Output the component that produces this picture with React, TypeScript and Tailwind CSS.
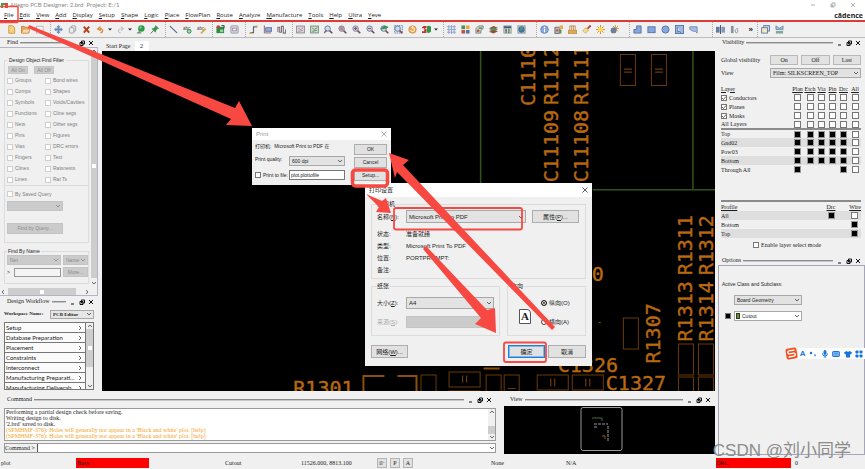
import type { ReactNode } from "react";
import clsx from "clsx";

const SERIF = "font-['Liberation_Serif','Noto_Sans_CJK_SC',serif]";
const SANS = "font-['Liberation_Sans','Noto_Sans_CJK_SC',sans-serif]";
const UI = "font-['Open_Sans','Noto_Sans_CJK_SC',sans-serif]";
const LATO = "font-['Lato','Noto_Sans_CJK_SC',sans-serif]";

const menus = [
  "File", "Edit", "View", "Add", "Display", "Setup", "Shape", "Logic", "Place", "FlowPlan",
  "Route", "Analyze", "Manufacture", "Tools", "Help", "Ultra", "Yeve",
];

const magnifier = (
  <>
    <circle cx="4" cy="4" r="3" fill="#cfdcec" stroke="#6b7fa6" strokeWidth="1.1" />
    <path d="M6.2 6.2 9.2 9.2" stroke="#7d4a52" strokeWidth="1.8" />
  </>
);
const board = <rect x="1" y="1" width="8" height="8" fill="#d4d9de" stroke="#8b929a" />;

const glyphs: Record<string, ReactNode> = {
  new: <path d="M2 .8h4.2L8.5 3v6.2H2z" fill="#f6cf7f" stroke="#cf9440" />,
  open: (
    <>
      <path d="M.5 8.8V1.5h3.2l1 1h4v6.3z" fill="#e9a860" stroke="#c9843c" />
      <path d="M.6 9 2.2 4.5h7.6L8.4 9z" fill="#fbd9a4" stroke="#c9843c" strokeWidth=".7" />
    </>
  ),
  save: <rect x="1.5" y="1.5" width="7.5" height="7.5" fill="#fff" stroke="#b3b3b3" />,
  move: (
    <path
      d="M5 .3 6.8 2.3H5.7v2h2V3.2l2 1.8-2 1.8V5.7h-2v2h1.1L5 9.7 3.2 7.7h1.1v-2h-2v1.1L.3 5l2-1.8v1.1h2v-2H3.2z"
      fill="#6f93c0"
      stroke="#4c6f9d"
      strokeWidth=".4"
    />
  ),
  copy: (
    <g fill="#eee" stroke="#9a9a9a">
      <rect x="3.5" y="1" width="5" height="6" rx="1" />
      <rect x="1.5" y="3" width="5" height="6" rx="1" />
    </g>
  ),
  delete: <path d="M2 1.8 8 8.4M8 1.8 2 8.4" stroke="#b3401d" strokeWidth="2.2" />,
  undo: <path d="M5 8.8C8.5 7.5 8 3.8 4 4.2M5 1.8 2 4.3l3.2 2" fill="none" stroke="#e08b35" strokeWidth="1.5" />,
  redo: <path d="M5 8.8C1.5 7.5 2 3.8 6 4.2M5.5 2 8.2 4.2 5.5 6.2" fill="none" stroke="#c3c3c3" strokeWidth="1.3" />,
  ball: (
    <>
      <circle cx="6" cy="4" r="3.6" fill="#2c9a45" />
      <circle cx="5" cy="3" r="1.2" fill="#8ed49c" />
      <path d="M1 8.8h5M3.5 6v3" stroke="#51705b" />
    </>
  ),
  pin: (
    <>
      <path d="M6.3.7 9.5 3.8 7.8 4.3 6.3 6.3 6 8 2.2 4.2 4 3.8 5.8 2.2z" fill="#2f9b4a" stroke="#1c6b31" strokeWidth=".5" />
      <path d="M4 6 .8 9.4" stroke="#4a6b55" />
    </>
  ),
  line: <path d="M1 1.2 9 8.8" stroke="#53648f" strokeWidth="1.2" />,
  textAdd: (
    <>
      <text x="0" y="5" fontSize="5" fill="#444">abc</text>
      <circle cx="6.8" cy="7" r="2.6" fill="#3f9d50" />
      <path d="M6.8 5.5v3M5.3 7h3" stroke="#e4f3e6" strokeWidth=".8" />
    </>
  ),
  textEdit: (
    <>
      <text x="0" y="5" fontSize="5" fill="#444">abc</text>
      <path d="M9.5 4 4.5 9.3" stroke="#e5a348" strokeWidth="2" />
    </>
  ),
  place: (
    <>
      <rect x=".5" y="2" width="8.5" height="7" fill="#2d8b42" />
      <rect x="4.5" y="5" width="3.5" height="3" fill="#9ad0a6" />
      <circle cx="2.5" cy="2.3" r="2" fill="#b54a36" />
      <path d="M6 .5h3v3" stroke="#235" fill="none" />
    </>
  ),
  chip: (
    <>
      <rect x="1" y="1" width="8" height="8" rx="1" fill="#dfe4ec" stroke="#8591a8" />
      <rect x="3" y="3.5" width="4" height="3" fill="#fff" stroke="#a07f86" />
    </>
  ),
  slide: (
    <>
      <path d="M1.5 8.5H5V2h4" fill="none" stroke="#5f6470" strokeWidth="1.3" />
      <path d="M.5 9h3M7 1.3h2.5" stroke="#d4a634" strokeWidth="1.6" />
    </>
  ),
  route: (
    <>
      <rect x="3" y="3" width="6.5" height="4" fill="#9aabcf" stroke="#5e76a8" />
      <path d="M1.5.5v8.3H9" fill="none" stroke="#8d5a5f" />
    </>
  ),
  delay: <path d="M1 8V2.5h2V8h2V1.5h2V9h2.5V5" fill="none" stroke="#7b6f78" strokeWidth="1.2" />,
  unrats: (
    <>
      <rect x=".7" y="1.2" width="8.6" height="7.6" fill="#dedbe2" stroke="#89808f" />
      <path d="M2.5 3.5 5 5l3-2M2.5 7 7.5 6" stroke="#ad7e86" fill="none" />
    </>
  ),
  rats: (
    <>
      <rect x=".7" y="1.2" width="8.6" height="7.6" fill="#d0ddd0" stroke="#6e8673" />
      <path d="M2.5 3.5 5 5l3-2M2.5 7 7.5 6" stroke="#4f8a5a" fill="none" />
    </>
  ),
  zoomWin: <>{magnifier}<path d="M0 9 3 5.5" stroke="#6f6c77" strokeWidth="1.5" /></>,
  zoomFit: <>{magnifier}<circle cx="4" cy="4" r="2.5" fill="#b98a92" /></>,
  zoomIn: <>{magnifier}<path d="M4 2.3v3.4M2.3 4h3.4" stroke="#b43535" strokeWidth="1.1" /></>,
  zoomOut: <>{magnifier}<path d="M2.3 4h3.4" stroke="#b43535" strokeWidth="1.1" /></>,
  zoomPrev: <>{magnifier}<path d="M1 4.5 5 1l4 1.5L5 4z" fill="#359148" stroke="#359148" /></>,
  zoomSel: <><rect x=".5" y=".5" width="9" height="8.5" fill="#cfdeec" stroke="#728eac" strokeDasharray="1.5 1" />{magnifier}</>,
  refresh: (
    <>
      <circle cx="5" cy="5" r="4.2" fill="#eda651" stroke="#c9803a" strokeWidth=".6" />
      <path d="M2.8 5.5a2.3 2.3 0 1 0 2-2.8M5.5 1 4 2.8l2 1.5" fill="none" stroke="#fff3df" strokeWidth="1.1" />
    </>
  ),
  flip: (
    <>
      <path d="M0 2.5 2 1h3v2.5H3.5v1H5v4.3H0V7h2.5V3.5H0z" fill="#c33333" />
      <path d="M5.5 1.5 8 .8 10 2v5.5L7.5 9l-2-.8z" fill="#2f9940" />
    </>
  ),
  grid: <path d="M2 0v10M5 0v10M8 0v10M0 2h10M0 5h10M0 8h10" stroke="#8199c8" strokeWidth=".9" />,
  colors: (
    <>
      <rect x=".5" y=".5" width="4" height="4" fill="#4e9054" />
      <rect x="5.5" y=".5" width="4" height="4" fill="#e6aa3e" />
      <rect x=".5" y="5.5" width="4" height="4" fill="#bb5549" />
      <rect x="5.5" y="5.5" width="4" height="4" fill="#5674ad" />
    </>
  ),
  layers: (
    <>
      <path d="M1 9V4l3-3h5v3L6.5 6v3z" fill="#d1d7d3" stroke="#72817a" />
      <circle cx="3.5" cy="6.5" r="1.5" fill="#bc4f46" />
      <path d="M4 3.5h4" stroke="#3f944c" strokeWidth="1.5" />
    </>
  ),
  stack: (
    <>
      <path d="M0 3.5 5 1l5 2-5 2.5z" fill="#9b4f3d" />
      <path d="M0 5.5 5 3l5 2-5 2.5z" fill="#4c9a58" />
      <path d="M0 7.5 5 5.5l5 1.5-5 2.5z" fill="#974c3d" />
    </>
  ),
  constraint: (
    <>
      {board}
      <path d="M1 2.5h8" stroke="#405b85" strokeWidth="2" />
      <path d="M3.5 4v5M6.5 4v5" stroke="#3f944c" strokeWidth="1.5" />
      <circle cx="3.5" cy="6" r="1" fill="#c54646" />
    </>
  ),
  world: (
    <>
      {board}
      <circle cx="5" cy="5" r="3.5" fill="#416fab" />
      <path d="M3 3l3-1 1 2-3 3z" fill="#4aa15a" />
    </>
  ),
  info: (
    <>
      <circle cx="5" cy="5" r="4.3" fill="#89a7da" stroke="#5472a8" strokeWidth=".7" />
      <path d="M5 4.3V8M5 2v1.3" stroke="#fff" strokeWidth="1.3" />
    </>
  ),
  element: (
    <>
      <path d="M1 2.5h5v7H1z" fill="#b9b9bc" stroke="#68696e" />
      <circle cx="3.5" cy="6" r="1.2" fill="#bf4848" />
      <rect x="6" y=".5" width="4" height="4" fill="#e6b245" />
      <path d="M7.5 5v4.5" stroke="#3f8e4b" strokeWidth="1.5" />
    </>
  ),
  measure: (
    <>
      <path d="M0 6h10v3.5H0z" fill="#e3a94b" stroke="#a5742f" strokeWidth=".6" />
      <path d="M2 6V1h6v5M4 1v5M6 1v5" fill="none" stroke="#bd8c4a" />
    </>
  ),
  brush: (
    <>
      <path d="M9.5.5 5.5 5" stroke="#b83e3b" strokeWidth="2" />
      <path d="M6 3.5 7 6 4 9.3.8 6.5 3.5 3.3z" fill="#f2dc90" stroke="#b69a4a" strokeWidth=".6" />
    </>
  ),
  sun: (
    <>
      <path d="M5 0v10M0 5h10M1.5 1.5l7 7M8.5 1.5l-7 7" stroke="#d98d2c" strokeWidth="1.1" />
      <circle cx="5" cy="5" r="2.6" fill="#ffd953" />
    </>
  ),
  shadow: (
    <>
      <path d="M6 0v8M2 4h8M3.3 1l5.5 6M8.8 1 4 7" stroke="#d98d2c" />
      <circle cx="4" cy="6" r="3.3" fill="#66809d" />
    </>
  ),
  poly: <path d="M1 9V5h3V1h5v8z" fill="#87a6dc" stroke="#5572a8" />,
  rect: <rect x="1" y="2" width="8" height="6.5" fill="#87a6dc" stroke="#5572a8" />,
  circle: <circle cx="5" cy="5" r="4" fill="#87a6dc" stroke="#5572a8" />,
  select: (
    <>
      <rect x=".5" y=".5" width="9" height="9" fill="#9db9e6" stroke="#5572a8" />
      <path d="M3 2v6l1.8-1.5L6.5 9" fill="#fff" stroke="#3e5687" strokeWidth=".8" />
    </>
  ),
  voids: <path d="M1 2h8v7L7 7H5L1 5z" fill="#a8bde3" stroke="#6b86b8" />,
  mirror: (
    <>
      <rect x="0" y="2" width="4" height="6.5" fill="#647a9f" />
      <rect x="6" y="2" width="4" height="6.5" fill="#8299bd" />
      <path d="M5 0v10" stroke="#40485a" />
    </>
  ),
  drill: (
    <>
      <rect x="1" y="1" width="3" height="8" fill="#89929e" />
      <path d="M9 4C6 4 5 6 6 8s4 0 2-3" fill="none" stroke="#8a8f96" />
    </>
  ),
  windows: (
    <>
      <rect x="3" y=".7" width="6.5" height="6" fill="#c8d6ef" stroke="#5d79ad" />
      <rect x=".7" y="3" width="6.5" height="6" fill="#f4e9b7" stroke="#5d79ad" />
    </>
  ),
  cut: (
    <>
      <path d="M1 1v4h8V1L5 3.5z" fill="#9bb7dc" stroke="#6682ad" strokeWidth=".8" />
      <rect x="1" y="6.5" width="8" height="3" fill="#7ea992" />
    </>
  ),
};

const toolGroups = [
  { cls: "ml-1", items: ["new", "open", "save"] },
  { cls: "ml-1", items: ["move", "copy", "delete", "undo", "drop", "redo", "drop", "ball", "pin"] },
  { cls: "ml-1", items: ["line", "textAdd", "textEdit"] },
  { cls: "ml-1", items: ["place", "chip"] },
  { cls: "ml-1", items: ["slide", "route", "delay"] },
  {
    cls: "ml-1",
    items: ["unrats", "rats", "zoomWin", "zoomFit", "zoomIn", "zoomOut", "zoomPrev", "zoomSel", "refresh", "flip", "drop"],
  },
  { cls: "ml-1", items: ["grid", "colors", "layers", "stack", "constraint", "world"] },
  { cls: "ml-2", items: ["info", "element", "measure", "brush", "sun", "shadow"] },
  { cls: "ml-2", items: ["poly", "rect", "circle", "select", "voids"] },
  { cls: "ml-3", items: ["mirror", "drill", "more"] },
  { cls: "ml-1", items: ["windows", "cut"] },
];

function ToolButton({ name }: { name: string }) {
  if (name === "drop") {
    return (
      <button aria-label="More options" className="flex w-[6px] items-center justify-center">
        <svg viewBox="0 0 4 3" className="w-1"><path d="M0 .5h4L2 2.5z" fill="#222" /></svg>
      </button>
    );
  }
  if (name === "more") {
    return <button className="flex w-[12px] items-center justify-end text-[8px] font-bold">»</button>;
  }
  return (
    <button aria-label={name} className="flex w-[14px] items-center justify-center">
      <svg viewBox="0 0 10 10" className="size-[9px]" strokeWidth="1" fill="none">
        {glyphs[name]}
      </svg>
    </button>
  );
}

function Chevron({ className }: { className?: string }) {
  return (
    <svg viewBox="0 0 6 6" className={clsx("size-[6px]", className)} fill="none" stroke="#555" strokeWidth=".9">
      <path d="m1 2 2 2 2-2" />
    </svg>
  );
}

function PanelHeader({ title }: { title: string }) {
  return (
    <div className={clsx("flex h-[9px] shrink-0 items-center pl-[7px] pr-1 text-[6px]", SERIF)}>
      <span>{title}</span>
      <span className="ml-[2px] mr-1 h-[2px] flex-1 border-t border-[#8a8a8a] bg-[#c8c8c8]" />
      <span className="flex gap-[3px]">
        {["M1 5h3", "M2.5 1h3v3h-3zM1 2.5h3v3H1z", "m1 1 4 4M5 1 1 5"].map((d, i) => (
          <button key={d} aria-label={["Minimise", "Float", "Close"][i] + " " + title}>
            <svg viewBox="0 0 6 6" className="size-[6px]" fill="none" stroke="#111"><path d={d} /></svg>
          </button>
        ))}
      </span>
    </div>
  );
}

function Select({ label, options, className, disabled }: { label: string; options: string[]; className?: string; disabled?: boolean }) {
  return (
    <div className={clsx("relative flex border", className, disabled ? "border-[#c4c4c4] bg-[#cbcbcb] text-[#8b8b8b]" : "border-[#a8a8a8]")}>
      <select aria-label={label} disabled={disabled} className="w-full appearance-none bg-transparent px-[2px] outline-none">
        {options.map((o) => <option key={o}>{o}</option>)}
      </select>
      <Chevron className={clsx("pointer-events-none absolute right-px top-1/2 -translate-y-1/2", disabled && "opacity-50")} />
    </div>
  );
}

function Tick({ label, checked, disabled, className }: { label: string; checked?: boolean; disabled?: boolean; className?: string }) {
  return (
    <label className={clsx("flex items-center gap-[2px] whitespace-nowrap", className)}>
      <span className="relative flex">
        <input
          type="checkbox"
          defaultChecked={checked}
          disabled={disabled}
          className={clsx("peer size-[6px] appearance-none border bg-white", disabled ? "border-[#cfcfcf]" : "border-[#777]")}
        />
        <svg viewBox="0 0 6 6" className="pointer-events-none absolute inset-0 hidden size-[6px] peer-checked:block" fill="none" stroke="#444" strokeWidth=".8">
          <path d="m1 3 1.5 1.5L5 1.5" />
        </svg>
      </span>
      {label}
    </label>
  );
}

const greyButton = "border border-[#c4c4c4] bg-[#cbcbcb] text-[#8b8b8b]";

const filters = [
  "Groups", "Bond wires", "Comps", "Shapes", "Symbols", "Voids/Cavities", "Functions", "Cline segs", "Nets", "Other segs",
  "Pins", "Figures", "Vias", "DRC errors", "Fingers", "Text", "Clines", "Ratsnests", "Lines", "Rat Ts",
];

function FindPanel() {
  return (
    <div className={clsx("flex flex-1 flex-col border border-l-0 border-[#b4b4c2] text-[5px] leading-none", SANS)}>
      <div className="flex flex-1">
        <div className="flex-1 pl-1 pr-[2px] pt-2">
          <fieldset className="border border-[#dcdcdc]">
            <legend className="ml-[2px] px-[2px] leading-[8px]">Design Object Find Filter</legend>
            <div className="flex gap-[6px] pb-px pl-[3px] pt-[2px]">
              <button disabled className={clsx("h-2 w-5", greyButton)}>All On</button>
              <button disabled className={clsx("h-2 w-5", greyButton)}>All Off</button>
            </div>
            <div className="grid grid-cols-[38px_1fr] pl-[2px] text-[#7d7d7d]">
              {filters.map((f) => <Tick key={f} label={f} disabled className="h-[11px]" />)}
            </div>
          </fieldset>
          <div className="border border-t-0 border-[#dcdcdc] pb-2 pl-[2px] pt-[5px] text-[#7d7d7d]">
            <Tick label="By Saved Query" disabled />
            <Select label="Saved query" options={[""]} disabled className="mt-1 h-[10px] w-14" />
            <button disabled className={clsx("mt-3 h-[11px] w-14", greyButton)}>Find by Query...</button>
          </div>
          <fieldset className="mt-1 border border-[#dcdcdc] pb-[6px]">
            <legend className="ml-[2px] px-[1px] leading-[8px]">Find By Name</legend>
            <div className="grid grid-cols-[54px_25px] gap-[2px] pl-[2px]">
              <Select label="Find by" options={["Net"]} disabled className="h-[10px]" />
              <Select label="Match" options={["Name"]} disabled className="h-[10px]" />
              <label className="flex items-center gap-1">
                &gt;
                <input aria-label="Object name" disabled className="h-[9px] w-0 flex-1 border border-[#9a9a9a] bg-[#f4f4f4]" />
              </label>
              <button disabled className={clsx("h-[10px]", greyButton)}>More...</button>
            </div>
          </fieldset>
        </div>
        <div className="flex w-[7px] flex-col items-center">
          <Chevron className="rotate-180" />
          <div className="flex w-full flex-1 items-center justify-center bg-[#cdcdcd]"><span className="size-1 bg-white" /></div>
          <Chevron className="my-[2px]" />
        </div>
      </div>
      <div className="flex h-[7px] items-center gap-[2px] pr-[7px]">
        <Chevron className="rotate-90" />
        <div className="flex h-full flex-1 items-center justify-center bg-[#cdcdcd]"><span className="size-1 bg-white" /></div>
        <Chevron className="ml-[6px] -rotate-90" />
      </div>
    </div>
  );
}

const steps = [
  "Setup", "Database Preparation", "Placement", "Constraints", "Interconnect", "Manufacturing Preparati...", "Manufacturing Deliverab...",
];

function Workflow() {
  return (
    <>
      <div className="h-px" />
      <PanelHeader title="Design Workflow" />
      <div className={clsx("flex h-4 items-center gap-[6px] px-1 text-[5px]", SERIF)}>
        <span className="flex-1 whitespace-nowrap font-bold">Workspace Name:</span>
        <Select label="Workspace" options={["PCB Editor"]} className="h-[9px] w-11 bg-[#e6e6e6] font-bold" />
      </div>
      <div className="mx-1 flex h-[68px] border border-[#777] bg-white">
        <ul className={clsx("flex-1 overflow-hidden text-[6px]", LATO)}>
          {steps.map((s) => (
            <li key={s} className="flex h-[10px] items-center justify-between border-b border-[#777] bg-[#fbfbfb] pl-px pr-[2px] leading-none">
              <a href="#workflow" className="whitespace-nowrap">{s}</a>
              <Chevron className="-rotate-90" />
            </li>
          ))}
        </ul>
        <div className="flex w-2 flex-col items-center border-l border-[#777] bg-[#f0f0f0]">
          <Chevron className="rotate-180" />
          <div className="flex h-[38px] w-full items-center justify-center bg-[#cdcdcd]"><span className="size-1 bg-white" /></div>
          <Chevron className="mt-auto" />
        </div>
      </div>
    </>
  );
}

const uprights = [
  { t: "C1110", x: 432, y: 55 },
  { t: "C11109", x: 455, y: 131 },
  { t: "R1112", x: 455, y: 54 },
  { t: "C11108", x: 485, y: 131 },
  { t: "R1111", x: 485, y: 54 },
  { t: "R1311", x: 589, y: 224 },
  { t: "R1312", x: 610, y: 224 },
  { t: "R1313", x: 589, y: 290 },
  { t: "R1314", x: 610, y: 290 },
  { t: "R1307", x: 557, y: 312 },
];

function Board() {
  return (
    <svg viewBox="0 0 612 340" preserveAspectRatio="xMinYMin slice" className="absolute inset-0 h-full w-full">
      <g fill="#b8680f" stroke="#b8680f" strokeWidth=".4" fontFamily="DejaVu Sans Mono, monospace" fontSize="20">
        {uprights.map((u) => (
          <text key={u.t} transform={`translate(${u.x} ${u.y}) rotate(-90)`}>{u.t}</text>
        ))}
        <text x="191" y="343">R1301</text>
        <text x="455" y="320">C1326</text>
        <text x="503" y="338">C1327</text>
        <text x="489" y="230">0</text>
      </g>
      <path d="M378 0V139M590 0V139M490 138.5H612" stroke="#335216" strokeWidth="1.5" fill="none" />
      <g fill="none" stroke="#6b3a08">
        <path d="M517.5 3.5h15v31h-15zM548.5 3.5h15v31h-15zM520.5 266.5h15v31h-15z" />
        <path d="M575.5 292.5h15v31h-15zM595.5 292.5h15v31h-15zM575.5 325.5h15v20h-15zM595.5 325.5h15v20h-15z" />
        <path d="M434.5 323.5h31v15h-31zM469.5 323.5h31v15h-31zM346.5 320.5h31v15h-31zM346.5 339.5h31v9h-31z" />
        <path d="M318.5 323.5h15v20h-15zM383.5 323.5h15v20h-15zM401.5 323.5h15v20h-15zM405 337h8" />
        <path d="M521 18h8M521 21h8M552 18h8M552 21h8M448 327v8M452 327v8M483 327v8M487 327v8M360 324v7M364 324v7" strokeWidth="1.2" />
      </g>
      <path d="M261 340V324.5h21M295 324.5h19V340M381 317h16" stroke="#8c4e0c" strokeWidth="2" fill="none" />
      <path d="M496 271h2" stroke="#8c4e0c" />
    </svg>
  );
}

function PinBox({ on, label }: { on: boolean; label: string }) {
  return (
    <input
      type="checkbox"
      aria-label={label}
      defaultChecked={on}
      className="mx-auto block size-[7px] appearance-none border border-[#777] bg-white checked:border-[#999] checked:bg-black"
    />
  );
}

const layerCols = ["Plan", "Etch", "Via", "Pin", "Drc", "All"];
const groupsRows = ["Conductors", "Planes", "Masks", "All Layers"];
const layerRows = ["Top", "Gnd02", "Pow03", "Bottom", "Through All"];
const flatButton = "border border-[#b9b9b9] bg-[#e2e2e2]";

function Visibility() {
  return (
    <div className={clsx("pb-2 pl-[6px] pr-1 pt-2 text-[6px] leading-none", SERIF)}>
      <div className="flex h-[10px] gap-[3px]">
        <span className="w-[46px] self-center whitespace-nowrap">Global visibility</span>
        {["On", "Off", "Last"].map((b) => <button key={b} className={clsx("flex-1", flatButton)}>{b}</button>)}
      </div>
      <div className="mt-[3px] flex h-[10px]">
        <span className="w-[49px] self-center">View</span>
        <Select label="View" options={["Film: SILKSCREEN_TOP"]} className="flex-1 bg-[#e2e2e2]" />
      </div>
      <table className="mt-[6px] w-full table-fixed border-collapse">
        <colgroup>
          <col />
          <col className="w-[13px]" />
          <col className="w-[12px]" />
          <col className="w-[11px]" />
          <col className="w-[11px]" />
          <col className="w-[11px]" />
          <col className="w-[12px]" />
        </colgroup>
        <thead>
          <tr className="h-[9px] underline">
            <th className="text-left font-normal">Layer</th>
            {layerCols.map((c) => <th key={c} className="font-normal">{c}</th>)}
          </tr>
        </thead>
        <tbody>
          {groupsRows.map((r, i) => (
            <tr key={r} className="h-[9px]">
              <td className="p-0">{i < 3 ? <Tick label={r} checked /> : r}</td>
              {layerCols.map((c) => <td key={c} className="p-0"><PinBox on={false} label={r + " " + c} /></td>)}
            </tr>
          ))}
        </tbody>
        <tbody className="border-t-2 border-[#8a8a8a]">
          {layerRows.map((r, i) => (
            <tr key={r} className={clsx("h-[9px]", i % 2 === 1 && "bg-[#dedede]")}>
              <td className="p-0">{r}</td>
              {layerCols.map((c) => (
                <td key={c} className="p-0">
                  {(i < 4 || ["Plan", "Drc", "All"].includes(c)) && <PinBox on={c !== "All"} label={r + " " + c} />}
                </td>
              ))}
            </tr>
          ))}
        </tbody>
      </table>
      <table className="mt-[26px] w-full border-t-2 border-[#8a8a8a]">
        <thead>
          <tr className="h-[10px] underline">
            <th className="text-left font-normal">Profile</th>
            <th className="w-5 font-normal">Drc</th>
            <th className="w-5 p-0 text-right font-normal">Wire</th>
          </tr>
        </thead>
        <tbody>
          {["All", "Bottom", "Top"].map((r, i) => (
            <tr key={r} className={clsx("h-[9px]", i % 2 === 0 && "bg-[#dedede]")}>
              <td className="p-0">{r}</td>
              <td className="p-0">{i === 0 && <PinBox on label={r + " Drc"} />}</td>
              <td className="p-0 pl-[7px]"><PinBox on={i > 0} label={r + " Wire"} /></td>
            </tr>
          ))}
        </tbody>
      </table>
      <Tick label="Enable layer select mode" className="ml-8 mt-1" />
    </div>
  );
}

function Options() {
  return (
    <div className={clsx("ml-[3px] flex-1 border border-[#a5a5b5] pl-[3px] pt-4 text-[5px] leading-none", SANS)}>
      <p>Active Class and Subclass:</p>
      <Select label="Class" options={["Board Geometry"]} className="ml-3 mt-2 h-[10px] w-[68px] bg-[#e2e2e2]" />
      <div className="mt-[6px] flex items-center">
        <span className="mx-[3px] size-[6px] border border-[#777] bg-black" />
        <div className="relative">
          <Select label="Subclass" options={["Cutout"]} className="h-[10px] w-[68px] bg-white pl-[5px]" />
          <span className="absolute left-[2px] top-[2px] h-[6px] w-1 border border-[#333] bg-[#5c9a20]" />
        </div>
      </div>
    </div>
  );
}

function CommandArea() {
  return (
    <section className="flex flex-1 flex-col pb-1 pt-px">
      <PanelHeader title="Command" />
      <div className="ml-1 mt-1 flex h-[33px] border border-[#9a9a9a] bg-white">
        <div className={clsx("flex-1 overflow-hidden whitespace-nowrap pl-px text-[6px] leading-[6px]", SERIF)}>
          <p>Performing a partial design check before saving.</p>
          <p>Writing design to disk.</p>
          <p>'2.brd' saved to disk.</p>
          <p className="text-[#f5a21c]">(SPMHMF-376): Holes will generally not appear in a 'Black and white' plot. [help]</p>
          <p className="text-[#f5a21c]">(SPMHMF-376): Holes will generally not appear in a 'Black and white' plot. [help]</p>
        </div>
        <div className="flex w-[7px] flex-col items-center bg-[#f0f0f0]">
          <Chevron className="rotate-180" />
          <div className="mt-auto h-2 w-full bg-[#cdcdcd]" />
          <Chevron />
        </div>
      </div>
      <label className={clsx("ml-1 mt-[2px] flex h-[10px] items-center border border-[#9a9a9a] bg-white text-[6px] leading-[8px]", SERIF)}>
        <span className="h-full whitespace-nowrap bg-[#f0f0f0] pr-[2px]">Command &gt;</span>
        <input className="h-full w-0 flex-1 border-l border-[#555] outline-none" />
        <Chevron />
      </label>
    </section>
  );
}

function ViewArea() {
  return (
    <section className="ml-[7px] flex w-[212px] flex-col pb-[3px] pt-px">
      <PanelHeader title="View" />
      <div className="ml-px mt-[2px] flex flex-1 justify-center bg-black">
        <svg viewBox="0 0 44 46" className="h-[46px] w-11 -translate-x-2" fill="none">
          <rect x="1" y="1.5" width="41" height="43" rx="2" stroke="#999" />
          <path d="M14 18h14M14 21h3M28 20v16" stroke="#9a9a9a" strokeDasharray="3 1" />
          <path d="M12 12h10v3" stroke="#4b6b3a" />
          <path d="M22 30h3v3" stroke="#b8680f" strokeWidth=".8" />
        </svg>
      </div>
    </section>
  );
}

const dlgButton = "border border-[#adadad] bg-[#e1e1e1]";

function PrintDialog() {
  return (
    <div role="dialog" aria-label="Print" className={clsx("absolute left-[252px] top-[128px] w-[139px] bg-[#f0f0f0] text-[5px] leading-none", SANS)}>
      <div className="flex h-3 items-center justify-between bg-white px-1 text-[6px] text-[#999]">
        Print
        <button aria-label="Close Print"><svg viewBox="0 0 6 6" className="size-[6px]" stroke="#999" strokeWidth=".8"><path d="m.5.5 5 5M5.5.5l-5 5" /></svg></button>
      </div>
      <div className="flex justify-between pb-1 pl-[3px] pr-1 pt-1">
        <div className="flex w-[90px] flex-col gap-1">
          <p className="h-2 whitespace-nowrap">打印机:&nbsp; Microsoft Print to PDF 在</p>
          <div className="flex justify-between">
            <span className="pt-px">Print quality:</span>
            <Select label="Print quality" options={["600 dpi"]} className="h-[10px] w-14 bg-[#e3e3e3]" />
          </div>
          <div className="flex items-center justify-between">
            <Tick label="Print to file:" />
            <input aria-label="File name" defaultValue="plot.plottofile" className="h-[10px] w-14 border border-[#777] bg-white pl-px" />
          </div>
        </div>
        <div className="flex w-[33px] flex-col gap-[2px]">
          {["OK", "Cancel", "Setup..."].map((b) => <button key={b} className={clsx("h-[11px]", dlgButton)}>{b}</button>)}
        </div>
      </div>
    </div>
  );
}

function Key({ children }: { children: string }) {
  return <u className="decoration-1">{children}</u>;
}

function SetupDialog() {
  return (
    <div role="dialog" aria-label="打印设置" className={clsx("absolute left-[365px] top-[183px] w-[227px] bg-[#f0f0f0] text-[6px] leading-none", SANS)}>
      <div className="flex h-[14px] items-center justify-between bg-white px-1">
        打印设置
        <button aria-label="关闭"><svg viewBox="0 0 6 6" className="size-[6px]" stroke="#333" strokeWidth=".8"><path d="m.5.5 5 5M5.5.5l-5 5" /></svg></button>
      </div>
      <div className="px-[6px] pb-2 pt-1">
        <fieldset className="border border-[#dcdcdc] pb-[2px] pl-[5px]">
          <legend className="leading-[6px]">打印机</legend>
          <div className="mt-[3px] flex items-center">
            <label className="w-[29px] whitespace-nowrap">名称(<Key>N</Key>):</label>
            <Select label="名称" options={["Microsoft Print to PDF"]} className="h-[13px] w-[120px] bg-[#e3e3e3]" />
            <button className={clsx("ml-[6px] h-[13px] w-[47px]", dlgButton)}>属性(<Key>P</Key>)...</button>
          </div>
          <dl className="mt-[5px] grid grid-cols-[29px_1fr] leading-[12px]">
            <dt>状态:</dt><dd>准备就绪</dd>
            <dt>类型:</dt><dd>Microsoft Print To PDF</dd>
            <dt>位置:</dt><dd>PORTPROMPT:</dd>
            <dt>备注:</dt><dd />
          </dl>
        </fieldset>
        <div className="mt-1 flex gap-[7px]">
          <fieldset className="h-[53px] flex-1 border border-[#dcdcdc] pl-[5px]">
            <legend className="leading-[6px]">纸张</legend>
            <div className="mt-2 flex items-center">
              <label className="w-[29px]">大小(<Key>Z</Key>):</label>
              <Select label="大小" options={["A4"]} className="h-3 w-[88px] bg-[#e3e3e3]" />
            </div>
            <div className="mt-[7px] flex items-center text-[#aaa]">
              <label className="w-[29px]">来源(<Key>S</Key>):</label>
              <Select label="来源" options={[""]} disabled className="h-3 w-[88px]" />
            </div>
          </fieldset>
          <fieldset className="h-[53px] w-[79px] border border-[#dcdcdc] pl-[11px]">
            <legend className="-ml-2 leading-[6px]">方向</legend>
            <div className="mt-2 flex items-end gap-[10px]">
              <span className={clsx("mb-1 flex h-[15px] w-[12px] items-center justify-center rounded-tr border border-[#555] bg-white text-[11px] font-bold", SERIF)}>A</span>
              <div className="flex flex-col gap-[7px]">
                {["纵向(O)", "横向(A)"].map((o, i) => (
                  <label key={o} className="flex h-3 items-center gap-[2px]">
                    <input type="radio" name="orientation" defaultChecked={i === 0} className="size-[6px] appearance-none rounded-full border border-[#444] bg-white checked:border-[#222] checked:bg-[#333] checked:ring-1 checked:ring-inset checked:ring-white" />
                    {o}
                  </label>
                ))}
              </div>
            </div>
          </fieldset>
        </div>
        <div className="mt-[9px] flex h-[13px] items-stretch gap-[3px]">
          <button className={clsx("mr-auto w-[37px]", dlgButton)}>网络(<Key>W</Key>)...</button>
          <button className="w-[37px] border border-[#1b7fd4] bg-[#e1e1e1] ring-1 ring-inset ring-[#7db9ea]">确定</button>
          <button className={clsx("w-[38px]", dlgButton)}>取消</button>
        </div>
      </div>
    </div>
  );
}

function Marks() {
  return (
    <svg viewBox="0 0 865 469" className="pointer-events-none absolute left-0 top-0 w-[865px]">
      <g fill="none" stroke="#f74842">
        <rect x="-1" y="6.5" width="19" height="16" rx="1" strokeWidth="1.5" />
        <rect x="352.5" y="170" width="35" height="16" rx="3" strokeWidth="3.5" />
        <rect x="394" y="208" width="128" height="21.5" rx="2" strokeWidth="1.8" />
        <rect x="504" y="342.5" width="42" height="19.5" rx="2" strokeWidth="1.8" />
      </g>
      <g fill="#f74842">
        <path d="M29 25 235 108 239 101 252 126 226 125 231 119 28 28z" />
        <path d="M366 194 382 201 386 198 391 213 376 212 379 207z" />
        <path d="M426 246 487 310 495 308 496 333 475 324 481 318 423 249z" />
        <path d="M389 153 409 160 403 165 555 327 552 330 397 172 395 178z" />
      </g>
    </svg>
  );
}

function ImeBar() {
  return (
    <div className="absolute right-0 top-[347px] flex h-[13px] items-center">
      <svg viewBox="0 0 13 13" className="z-10 size-[13px]">
        <g transform="rotate(-10 6.5 6.5)">
          <rect x="1" y="1" width="11" height="11" rx="2" fill="#f0501e" />
          <path d="M10 3.5H4.5q-1.5 0-1.5 1.5t1.5 1.5h4Q10 6.5 10 8T8.5 9.5H3" fill="none" stroke="#fff" strokeWidth="1.4" />
        </g>
      </svg>
      <div className="flex h-[11px] w-[67px] items-center justify-around bg-white text-[8px] font-bold text-[#1673d8]">
        <span className={SANS}>A</span>
        <svg viewBox="0 0 8 8" className="size-2" fill="currentColor"><circle cx="2" cy="3" r="1.2" /><path d="M5 4.5h2l-1 2.5z" /></svg>
        <svg viewBox="0 0 8 8" className="size-2" fill="none" stroke="currentColor"><rect x="3" y=".5" width="2" height="4" rx="1" fill="currentColor" /><path d="M1.5 3.5q0 2.5 2.5 2.5t2.5-2.5M4 6v2" /></svg>
        <svg viewBox="0 0 8 8" className="size-2" fill="#8bbcf0" stroke="currentColor"><rect x=".7" y="1.5" width="6.6" height="5" rx=".5" /><path d="M2 3.2h4M2.5 5h3" strokeWidth=".6" /></svg>
        <svg viewBox="0 0 8 8" className="size-2" fill="currentColor"><path d="M2.5 1 4 2l1.5-1L8 2.5 7 4.5l-1-.5v3.5H2V4l-1 .5-1-2z" /></svg>
        <svg viewBox="0 0 8 8" className="size-2" fill="currentColor"><rect x=".5" y=".5" width="3" height="3" rx=".8" /><rect x="4.5" y=".5" width="3" height="3" rx=".8" /><rect x=".5" y="4.5" width="3" height="3" rx=".8" /><rect x="4.5" y="4.5" width="3" height="3" rx=".8" /></svg>
      </div>
    </div>
  );
}

function StatusBar() {
  return (
    <footer className={clsx("grid h-3 grid-cols-[76fr_73fr_76fr_76fr_76fr_113fr_76fr_76fr_74fr_75fr_74fr] items-center text-[6px] leading-none", SERIF)}>
      <span className="pl-px">plot</span>
      <span className="h-[10px] bg-[#ff0000] pl-px leading-[10px]">Busy</span>
      <span />
      <span>Cutout</span>
      <span className="whitespace-nowrap">11526.000, 8813.100</span>
      <span className="flex gap-[3px]">
        {["il·", "P", "A"].map((b) => <button key={b} className="h-[10px] w-[10px] whitespace-nowrap border border-[#b5b5b5] bg-[#e2e2e2]">{b}</button>)}
      </span>
      <span className="pl-px">None</span>
      <span>N/A</span>
      <span />
      <span className="h-[10px] bg-[#ff0000] leading-[10px]">DRC</span>
      <span className="pl-1">0</span>
    </footer>
  );
}

export default function App() {
  return (
    <div className={clsx("relative flex min-h-screen flex-col overflow-hidden bg-[#f0f0f0] text-[#1c1c1c]", SANS)}>
      <header className={clsx("border-b-2 border-[#dc3b36] bg-white text-[6px] leading-none", UI)}>
        <div className="flex h-[10px] items-center text-[#888]">
          <svg viewBox="0 0 8 7" className="ml-px h-[7px] w-2"><path d="M0 1h4v2H2v3H0z" fill="#35a344" /><path d="M4 1h3v5H4z" fill="#d44" /></svg>
          <h1 className={clsx("pl-px", LATO)}>Allegro PCB Designer: 2.brd&nbsp; Project: E:/1</h1>
          <div className="ml-auto flex gap-[14px] pr-[9px]">
            {["M1 3h4", "M2 1h3v3H2zM1 2v3h3", "m1 1 4 4M5 1 1 5"].map((d, i) => (
              <button key={d} aria-label={["Minimise", "Restore", "Close"][i]}>
                <svg viewBox="0 0 6 6" className="size-[6px]" fill="none" stroke="#777" strokeWidth=".6"><path d={d} /></svg>
              </button>
            ))}
          </div>
        </div>
        <nav className="flex h-[10px] items-center gap-[6px] pl-1">
          {menus.map((m) => <button key={m} className="first-letter:underline">{m}</button>)}
          <span className="ml-auto pr-[2px] text-[7px] font-bold">cādence</span>
        </nav>
      </header>
      <div className="flex h-4 border-b border-[#bbb]">
        {toolGroups.map((g, i) => (
          <div key={i} className={clsx("flex", g.cls, i > 0 && "border-l border-dotted border-[#aaa]")}>
            {g.items.map((n, k) => <ToolButton key={n + k} name={n} />)}
          </div>
        ))}
      </div>
      <main className="flex flex-1">
        <div className="flex flex-1 flex-col">
          <div className="flex flex-1">
            <aside className="flex w-[98px] flex-col">
              <PanelHeader title="Find" />
              <FindPanel />
              <Workflow />
              <div className="h-1" />
            </aside>
            <section className="flex flex-1 flex-col pb-[3px] pl-1">
              <div className={clsx("flex h-[13px] items-end text-[6px]", SERIF)}>
                <button className="h-[10px] px-1">Start Page</button>
                <button className="h-[10px] w-[14px] bg-white">2</button>
              </div>
              <div className="relative flex-1 overflow-hidden bg-black"><Board /></div>
            </section>
          </div>
          <div className="flex h-[63px]">
            <CommandArea />
            <ViewArea />
          </div>
        </div>
        <aside className="flex w-[150px] flex-col pb-[2px]">
          <PanelHeader title="Visibility" />
          <Visibility />
          <PanelHeader title="Options" />
          <Options />
        </aside>
      </main>
      <StatusBar />
      <PrintDialog />
      <SetupDialog />
      <ImeBar />
      <p className="absolute bottom-[10px] right-[14px] text-[17px] leading-none text-[#8c8c8c]">CSDN @刘小同学</p>
      <Marks />
    </div>
  );
}
